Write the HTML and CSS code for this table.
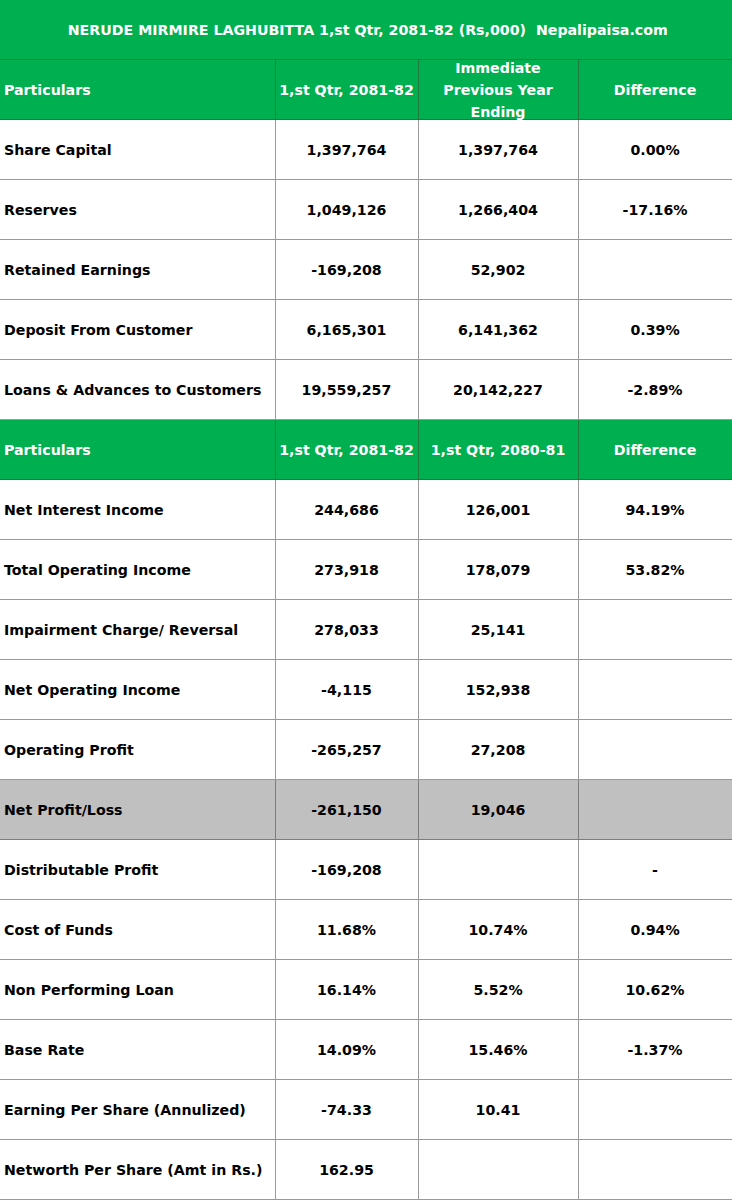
FILE: index.html
```html
<!DOCTYPE html>
<html lang="en">

<head>
    <meta charset="UTF-8">
    <meta name="viewport" content="width=device-width, initial-scale=1.0">
    <title>Nerude Mirmire Laghubitta 1st Qtr 2081-82</title>
    <link rel="stylesheet" href="styles.css">
</head>

<body>
    <table class="report">
        <colgroup>
            <col class="col-name">
            <col class="col-cur">
            <col class="col-prev">
            <col class="col-diff">
        </colgroup>
        <tr class="title">
            <td colspan="4">NERUDE MIRMIRE LAGHUBITTA 1,st Qtr, 2081-82 (Rs,000) &nbsp;Nepalipaisa.com</td>
        </tr>
        <tr class="head">
            <td>Particulars</td>
            <td>1,st Qtr, 2081-82</td>
            <td><div class="wrap">Immediate Previous Year Ending</div></td>
            <td>Difference</td>
        </tr>
        <tr><td>Share Capital</td><td>1,397,764</td><td>1,397,764</td><td>0.00%</td></tr>
        <tr><td>Reserves</td><td>1,049,126</td><td>1,266,404</td><td>-17.16%</td></tr>
        <tr><td>Retained Earnings</td><td>-169,208</td><td>52,902</td><td></td></tr>
        <tr><td>Deposit From Customer</td><td>6,165,301</td><td>6,141,362</td><td>0.39%</td></tr>
        <tr><td>Loans &amp; Advances to Customers</td><td>19,559,257</td><td>20,142,227</td><td>-2.89%</td></tr>
        <tr class="head">
            <td>Particulars</td>
            <td>1,st Qtr, 2081-82</td>
            <td>1,st Qtr, 2080-81</td>
            <td>Difference</td>
        </tr>
        <tr><td>Net Interest Income</td><td>244,686</td><td>126,001</td><td>94.19%</td></tr>
        <tr><td>Total Operating Income</td><td>273,918</td><td>178,079</td><td>53.82%</td></tr>
        <tr><td>Impairment Charge/ Reversal</td><td>278,033</td><td>25,141</td><td></td></tr>
        <tr><td>Net Operating Income</td><td>-4,115</td><td>152,938</td><td></td></tr>
        <tr><td>Operating Profit</td><td>-265,257</td><td>27,208</td><td></td></tr>
        <tr class="shade"><td>Net Profit/Loss</td><td>-261,150</td><td>19,046</td><td></td></tr>
        <tr><td>Distributable Profit</td><td>-169,208</td><td></td><td>-</td></tr>
        <tr><td>Cost of Funds</td><td>11.68%</td><td>10.74%</td><td>0.94%</td></tr>
        <tr><td>Non Performing Loan</td><td>16.14%</td><td>5.52%</td><td>10.62%</td></tr>
        <tr><td>Base Rate</td><td>14.09%</td><td>15.46%</td><td>-1.37%</td></tr>
        <tr><td>Earning Per Share (Annulized)</td><td>-74.33</td><td>10.41</td><td></td></tr>
        <tr><td>Networth Per Share (Amt in Rs.)</td><td>162.95</td><td></td><td></td></tr>
    </table>
</body>

</html>
```

FILE: styles.css
```css
body {
    margin: 0;
    background-color: white;
}

.report {
    width: 732px;
    table-layout: fixed;
    border-collapse: collapse;
    font-family: "DejaVu Sans", sans-serif;
    font-weight: bold;
    font-size: 14.2px;
    color: black;
}

.col-name {
    width: 275px;
}

.col-cur {
    width: 143px;
}

.col-prev {
    width: 160px;
}

.col-diff {
    width: 154px;
}

.report td {
    height: 59px;
    padding: 0;
    border: 1px solid #9a9a9a;
    text-align: center;
    vertical-align: middle;
    white-space: nowrap;
}

.report td:first-child {
    text-align: left;
    padding-left: 4px;
    border-left: 0;
}

.report td:last-child {
    border-right: 1px solid #222;
}

.title td,
.head td {
    background-color: #00b050;
    color: white;
    border-color: #1f7a3c;
}

.title td {
    border-top: 0;
    text-align: center !important;
}

.head .wrap {
    white-space: normal;
    line-height: 22px;
    margin: -4px 0;
    padding: 0 14px;
}

.shade td {
    background-color: #c0c0c0;
    border-color: #7d7d7d;
}
```
